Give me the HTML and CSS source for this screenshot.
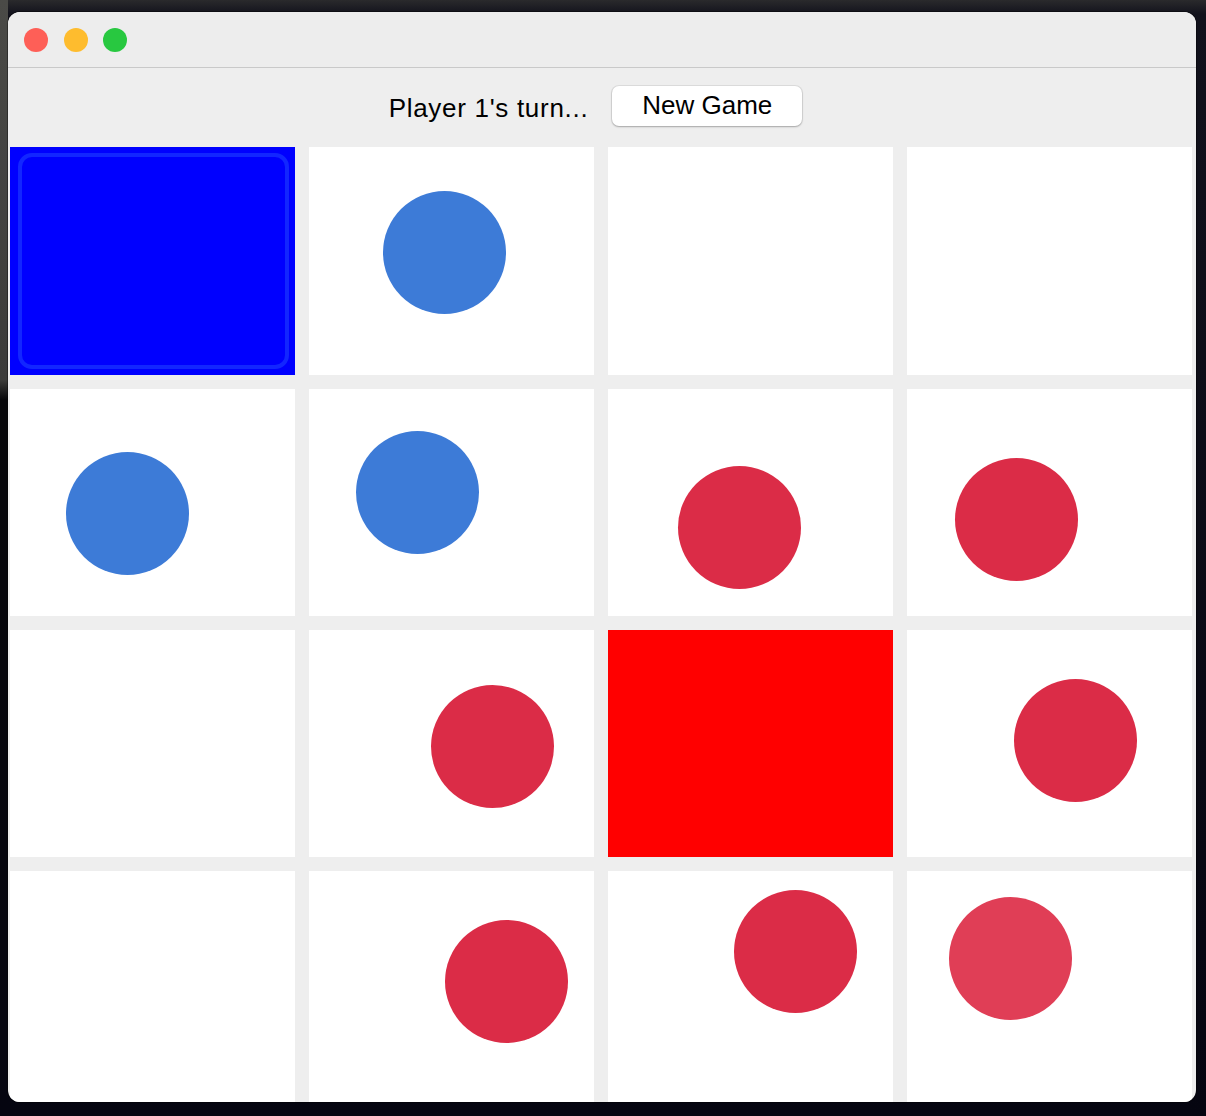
FILE: index.html
```html
<!DOCTYPE html>
<html>
<head>
<meta charset="utf-8">
<link rel="stylesheet" href="styles.css">
</head>
<body>
<div class="desk">
  <div class="window">
    <div class="titlebar">
      <span class="light red"></span>
      <span class="light yellow"></span>
      <span class="light green"></span>
    </div>
    <div class="header">
      <span class="status">Player 1's turn...</span>
      <button class="btn">New Game</button>
    </div>
    <div class="board">
      <div class="cell cell-blue"></div>
      <div class="cell"><span class="dot blue" style="left:74px;top:44px"></span></div>
      <div class="cell"></div>
      <div class="cell"></div>

      <div class="cell"><span class="dot blue" style="left:56px;top:63px"></span></div>
      <div class="cell"><span class="dot blue" style="left:47px;top:42px"></span></div>
      <div class="cell"><span class="dot red" style="left:70px;top:77px"></span></div>
      <div class="cell"><span class="dot red" style="left:48px;top:69px"></span></div>

      <div class="cell"></div>
      <div class="cell"><span class="dot red" style="left:122px;top:55px"></span></div>
      <div class="cell cell-red"></div>
      <div class="cell"><span class="dot red" style="left:107px;top:49px"></span></div>

      <div class="cell"></div>
      <div class="cell"><span class="dot red" style="left:136px;top:49px"></span></div>
      <div class="cell"><span class="dot red" style="left:126px;top:19px"></span></div>
      <div class="cell"><span class="dot red light-red" style="left:42px;top:26px"></span></div>
    </div>
  </div>
</div>
</body>
</html>
```

FILE: styles.css
```css
html, body {
  margin: 0;
  padding: 0;
}
body {
  width: 1206px;
  height: 1116px;
  overflow: hidden;
  background:
    linear-gradient(to bottom, #4a4a47 0, #3c3c3a 380px, #050508 400px, #050510 100%) left top / 8px 100% no-repeat,
    linear-gradient(to bottom, #2a2a2c 0, #12121c 14px, #050510 100%);
  font-family: "Liberation Sans", Arial, sans-serif;
}
.desk {
  padding: 12px 10px 0 8px;
}
.window {
  width: 1188px;
  height: 1090px;
  background: #eeeeee;
  border-radius: 12px;
  overflow: hidden;
  box-shadow: 0 0 0 1px rgba(0,0,0,0.35);
  display: flex;
  flex-direction: column;
}
.titlebar {
  height: 56px;
  flex: none;
  background: #ededed;
  border-bottom: 1px solid #c9c9c9;
  display: flex;
  align-items: center;
  gap: 15px;
  padding-left: 16px;
  box-sizing: border-box;
}
.light {
  width: 24px;
  height: 24px;
  border-radius: 50%;
  display: block;
  margin-top: 1px;
}
.light.red { background: #fe5f57; }
.light.yellow { background: #febc2e; }
.light.green { background: #28c840; }
.light.yellow { margin-left: 1px; }
.header {
  height: 79px;
  flex: none;
  display: flex;
  justify-content: center;
  align-items: center;
  gap: 24px;
  padding-right: 13px;
  box-sizing: border-box;
}
.status {
  font-size: 26px;
  letter-spacing: 0.7px;
  color: #000;
  margin-top: 2px;
}
.btn {
  width: 190px;
  height: 40px;
  border: none;
  border-radius: 7px;
  background: #ffffff;
  box-shadow: 0 0 0 1px rgba(0,0,0,0.07), 0 1px 2px rgba(0,0,0,0.25);
  font-family: "Liberation Sans", Arial, sans-serif;
  font-size: 26px;
  color: #000;
  padding: 0 0 2px 0;
  margin-top: -3px;
}
.board {
  flex: 1;
  display: grid;
  grid-template-columns: repeat(4, 285px);
  grid-template-rows: 228px 227px 227px 1fr;
  gap: 14px;
  padding-left: 2px;
}
.cell {
  background: #ffffff;
  position: relative;
}
.cell-blue {
  background: #0000ff;
}
.cell-blue::after {
  content: "";
  position: absolute;
  left: 8px;
  top: 6px;
  right: 6px;
  bottom: 6px;
  border: 4px solid #1226ff;
  border-radius: 14px;
}
.cell-red {
  background: #ff0000;
}
.dot {
  position: absolute;
  width: 123px;
  height: 123px;
  border-radius: 50%;
}
.dot.blue { background: #3d7bd7; }
.dot.red { background: #db2c47; }
.dot.light-red { background: #e03e56; }
```
